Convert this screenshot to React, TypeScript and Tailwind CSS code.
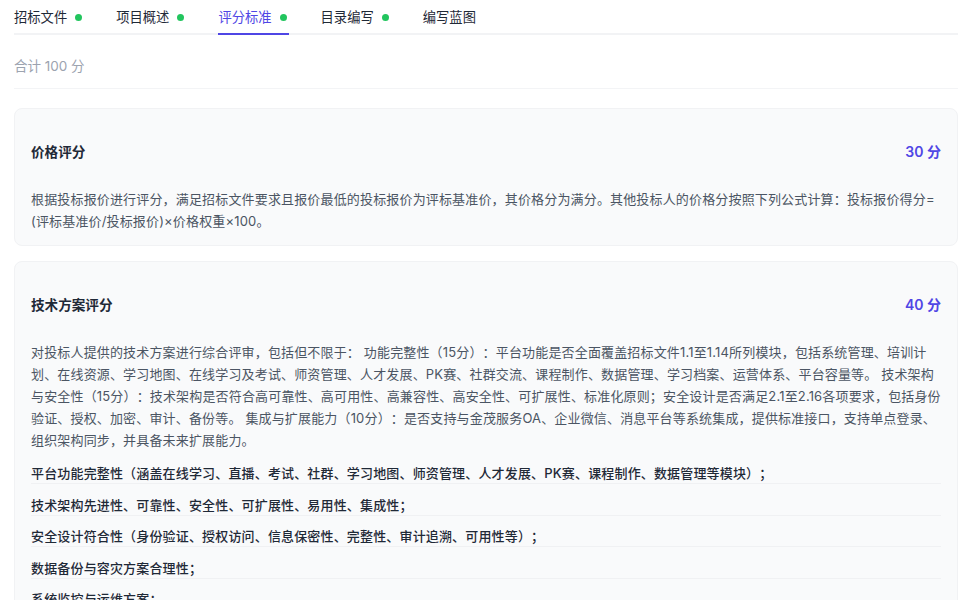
import React from "react";

const tabs = [
  { label: "招标文件", dot: true },
  { label: "项目概述", dot: true },
  { label: "评分标准", dot: true, active: true },
  { label: "目录编写", dot: true },
  { label: "编写蓝图", dot: false },
];

const techItems = [
  "平台功能完整性（涵盖在线学习、直播、考试、社群、学习地图、师资管理、人才发展、PK赛、课程制作、数据管理等模块）；",
  "技术架构先进性、可靠性、安全性、可扩展性、易用性、集成性；",
  "安全设计符合性（身份验证、授权访问、信息保密性、完整性、审计追溯、可用性等）；",
  "数据备份与容灾方案合理性；",
  "系统监控与运维方案；",
  "项目实施方案与进度计划合理性；",
];

function Card({
  title,
  score,
  desc,
  items,
}: {
  title: string;
  score: string;
  desc: string;
  items?: string[];
}) {
  return (
    <div className="rounded-lg border border-[#f1f2f4] bg-[#f9fafb] px-4 pt-[33px] pb-[13px]">
      <div className="flex items-center justify-between">
        <div className="text-[13.6px] font-semibold leading-[20px] text-[#1f2937]">{title}</div>
        <div className="text-[14px] font-semibold leading-[20px] text-[#5046e5]">{score}</div>
      </div>
      <p className="mt-[26px] text-[13px] leading-[22px] tracking-[0.16px] text-[#4b5563] [text-spacing-trim:space-all]">
        {desc}
      </p>
      {items && (
        <div className="mt-[12px] flex flex-col gap-[10.5px]">
          {items.map((it) => (
            <div
              key={it}
              className="border-b border-[#f0f1f3] text-[13px] font-medium leading-[20px] tracking-[0.16px] text-[#1f2937] [text-spacing-trim:space-all]"
            >
              {it}
            </div>
          ))}
        </div>
      )}
    </div>
  );
}

export default function App() {
  return (
    <div
      className="min-h-screen bg-white pl-[14px] pr-[2px]"
      style={{ fontFamily: 'Inter, "Noto Sans CJK SC", sans-serif' }}
    >
      <div className="flex gap-[32px] border-b-2 border-[#f2f3f5]">
        {tabs.map((t) => (
          <div
            key={t.label}
            className={
              "-mb-[2px] flex items-center gap-[8px] border-b-2 pt-[7px] pb-[6px] pr-[2px] text-[13.3px] leading-[20px] " +
              (t.active ? "border-[#4f46e5] text-[#4f46e5]" : "border-transparent text-[#1f2937]")
            }
          >
            <span>{t.label}</span>
            {t.dot && <span className="h-[7px] w-[7px] rounded-full bg-[#22c55e]" />}
          </div>
        ))}
      </div>
      <div className="mt-[21px] border-b border-[#f3f4f6] pb-[12px] text-[13.5px] leading-[20px] text-[#9ca3af]">
        合计 100 分
      </div>
      <div className="mt-[19px] flex flex-col gap-[15px]">
        <Card
          title="价格评分"
          score="30 分"
          desc="根据投标报价进行评分，满足招标文件要求且报价最低的投标报价为评标基准价，其价格分为满分。其他投标人的价格分按照下列公式计算：投标报价得分=(评标基准价/投标报价)×价格权重×100。"
        />
        <Card
          title="技术方案评分"
          score="40 分"
          desc="对投标人提供的技术方案进行综合评审，包括但不限于： 功能完整性（15分）：平台功能是否全面覆盖招标文件1.1至1.14所列模块，包括系统管理、培训计划、在线资源、学习地图、在线学习及考试、师资管理、人才发展、PK赛、社群交流、课程制作、数据管理、学习档案、运营体系、平台容量等。 技术架构与安全性（15分）：技术架构是否符合高可靠性、高可用性、高兼容性、高安全性、可扩展性、标准化原则；安全设计是否满足2.1至2.16各项要求，包括身份验证、授权、加密、审计、备份等。 集成与扩展能力（10分）：是否支持与金茂服务OA、企业微信、消息平台等系统集成，提供标准接口，支持单点登录、组织架构同步，并具备未来扩展能力。"
          items={techItems}
        />
      </div>
    </div>
  );
}
